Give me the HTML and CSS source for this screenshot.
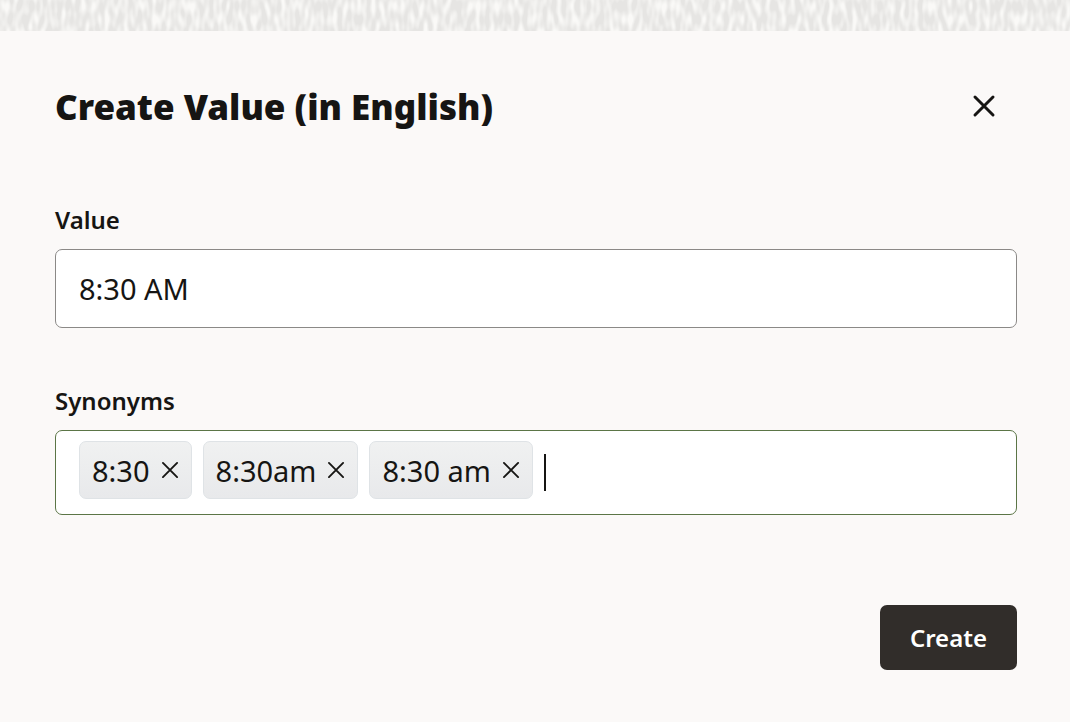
FILE: index.html
```
<!DOCTYPE html>
<html lang="en">
<head>
<meta charset="utf-8">
<meta name="viewport" content="width=device-width, initial-scale=1">
<title>Create Value</title>
<link rel="stylesheet" href="styles.css">
</head>
<body>
<svg class="texture" aria-hidden="true">
  <filter id="weave" x="0" y="0" width="100%" height="100%" color-interpolation-filters="sRGB">
    <feTurbulence type="fractalNoise" baseFrequency="0.21 0.075" numOctaves="1" seed="8"/>
    <feColorMatrix values="0 0 0 0 0.98  0 0 0 0 0.978  0 0 0 0 0.97  3 0 0 0 -1.15"/>
  </filter>
  <rect width="100%" height="100%" filter="url(#weave)"/>
</svg>
<main class="dialog" role="dialog" aria-labelledby="title">
  <header class="header">
    <h1 class="title" id="title">Create Value (in English)</h1>
    <button class="close" type="button" aria-label="Close">
      <svg class="close-icon" viewBox="0 0 22 22" aria-hidden="true"><path d="M2 1 20 19M20 1 2 19"/></svg>
    </button>
  </header>
  <form class="form">
    <div class="field">
      <label class="label" for="value">Value</label>
      <input class="value" id="value" type="text" value="8:30 AM">
    </div>
    <div class="field">
      <label class="label" for="synonyms">Synonyms</label>
      <div class="chips">
        <span class="chip">8:30<button class="remove" type="button" aria-label="Remove 8:30"><svg class="remove-icon" viewBox="0 0 18 18" aria-hidden="true"><path d="M1 1 16 16M16 1 1 16"/></svg></button></span>
        <span class="chip">8:30am<button class="remove" type="button" aria-label="Remove 8:30am"><svg class="remove-icon" viewBox="0 0 18 18" aria-hidden="true"><path d="M1 1 16 16M16 1 1 16"/></svg></button></span>
        <span class="chip">8:30 am<button class="remove" type="button" aria-label="Remove 8:30 am"><svg class="remove-icon" viewBox="0 0 18 18" aria-hidden="true"><path d="M1 1 16 16M16 1 1 16"/></svg></button></span>
        <span class="caret"></span>
        <input class="entry" id="synonyms" type="text">
      </div>
    </div>
    <button class="create" type="button">Create</button>
  </form>
</main>
</body>
</html>
```
FILE: styles.css
```
* { box-sizing: border-box; }
body {
  margin: 0;
  min-height: 100vh;
  background: #fbf9f8;
  color: #161513;
  font-family: "Noto Sans", "Open Sans", sans-serif;
}
.texture {
  display: block;
  width: 100%;
  height: 31px;
  background: #e6e5e3;
}
.dialog { padding: 48px 53px 52px 55px; }
.header {
  display: flex;
  align-items: center;
  justify-content: space-between;
}
.title {
  margin: 0;
  font-size: 35px;
  line-height: 56px;
  font-weight: 900;
}
.close {
  display: flex;
  margin-right: 22px;
  padding: 0;
  border: 0;
  background: none;
}
.close-icon {
  width: 22px;
  height: 22px;
  overflow: visible;
  fill: none;
  stroke: #161513;
  stroke-width: 3;
  stroke-linecap: round;
}
.form {
  display: flex;
  flex-direction: column;
  padding-top: 68px;
}
.field {
  display: flex;
  flex-direction: column;
  gap: 12px;
}
.field + .field { margin-top: 56px; }
.label {
  font-size: 24px;
  line-height: 34px;
  font-weight: 600;
}
.value {
  width: 100%;
  height: 79px;
  padding: 0 23px;
  border: 1px solid #8b8987;
  border-radius: 7px;
  background: #fff;
  color: inherit;
  font: 400 29px "Noto Sans", sans-serif;
}
.chips {
  display: flex;
  gap: 11px;
  padding: 10px 23px 15px;
  border: 1px solid #5b7546;
  border-radius: 7px;
  background: #fff;
}
.chip {
  display: flex;
  flex: none;
  align-items: center;
  gap: 12px;
  height: 58px;
  padding: 0 12px;
  border: 1px solid #dfe3e6;
  border-radius: 7px;
  background: linear-gradient(#f0f1f1, #e8e9eb);
  font-size: 29px;
}
.remove {
  display: flex;
  padding: 0;
  border: 0;
  background: none;
}
.remove-icon {
  width: 17px;
  height: 17px;
  overflow: visible;
  fill: none;
  stroke: #161513;
  stroke-width: 2;
  stroke-linecap: round;
}
.caret {
  width: 2px;
  height: 37px;
  margin-top: 13px;
  background: #161513;
}
.entry {
  flex: 1;
  min-width: 0;
  border: 0;
  outline: 0;
  background: none;
  font: 400 29px "Noto Sans", sans-serif;
}
.create {
  align-self: flex-end;
  margin-top: 90px;
  padding: 0 30px;
  border: 0;
  border-radius: 7px;
  background: #312d2a;
  color: #fff;
  font: 600 24px/65px "Noto Sans", sans-serif;
}
```
